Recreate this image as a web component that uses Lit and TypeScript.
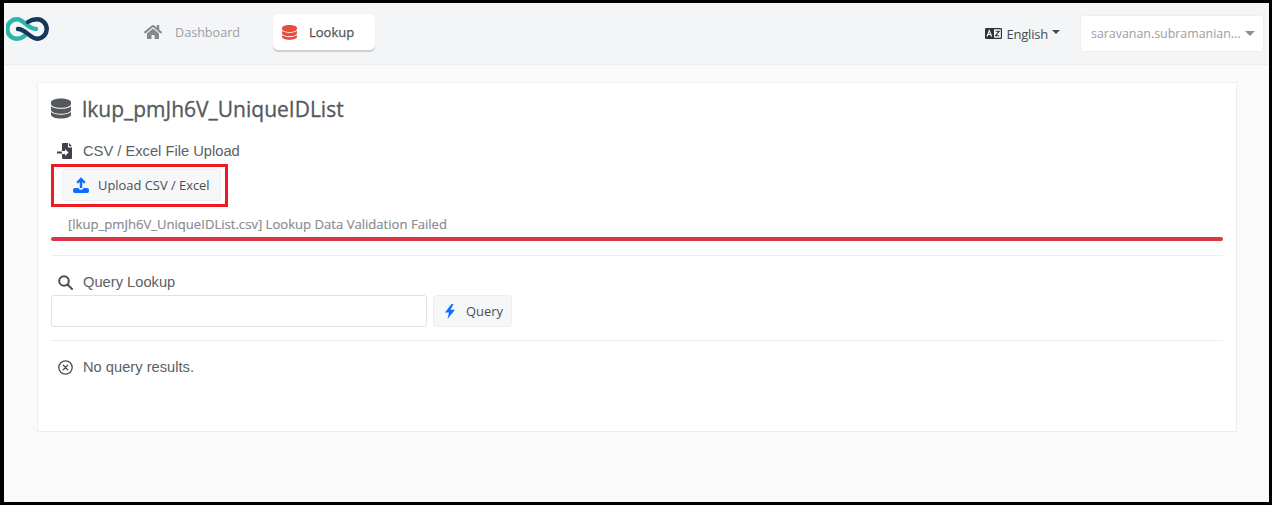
import { LitElement, html, css, svg } from "lit";
import { customElement } from "lit/decorators.js";

const db = svg`<path d="M224 32C100 32 0 70 0 117v38c0 47 100 85 224 85s224-38 224-85v-38C448 70 348 32 224 32zM0 203v84c0 47 100 85 224 85s224-38 224-85v-84c-48 40-136 61-224 61S48 243 0 203zM0 335v60c0 47 100 85 224 85s224-38 224-85v-60c-48 40-136 61-224 61S48 375 0 335z"/>`;

@customElement("app-root")
export class AppRoot extends LitElement {
  static styles = css`
    :host { display: block; width: 1272px; height: 505px; font-family: "Open Sans", sans-serif; }
    .frame { box-sizing: border-box; width: 1272px; height: 505px; border: solid #000; border-width: 3px 3px 3px 4px; background: #fafafa; display: flex; flex-direction: column; overflow: hidden; }
    .nav { height: 62px; flex: none; box-sizing: border-box; background: #f4f5f7; border-bottom: 1px solid #eceef0; display: flex; align-items: flex-start; }
    .logo { width: 44px; height: 28px; margin: 12px 0 0 2px; flex: none; }
    .links { display: flex; margin-left: 86px; margin-top: 11px; gap: 17px; }
    .link { display: flex; align-items: center; height: 36px; box-sizing: border-box; font-size: 12.6px; color: #9a9ea3; }
    .link svg { display: block; }
    .dash { padding: 0 16px 0 7px; gap: 12px; }
    .look { width: 102px; padding-left: 9px; gap: 12px; background: #fff; border-radius: 5px; color: #50545a; font-size: 13px; -webkit-text-stroke: 0.25px #50545a; box-shadow: 0 2px 1px rgba(0,0,0,.16); }
    .right { margin-left: auto; display: flex; align-items: center; margin-top: 12px; margin-right: 5px; }
    .lang { display: flex; align-items: center; font-size: 13px; letter-spacing: -0.2px; color: #454a50; gap: 4px; margin-right: 20px; }
    .caret { width: 0; height: 0; border: 4px solid transparent; border-top-color: currentColor; border-bottom: 0; margin-bottom: 3px; }
    .user { width: 184px; height: 37px; box-sizing: border-box; background: #fff; border: 1px solid #eceef0; border-radius: 4px; display: flex; align-items: center; justify-content: space-between; padding: 0 8px 0 10px; font-size: 12.4px; color: #9a9ea3; }
    .user .caret { border-width: 5px; border-bottom: 0; color: #8b8f94; margin: 0; }
    .main { padding: 17px 32px 0 33px; flex: 1; }
    .card { box-sizing: border-box; height: 350px; background: #fff; border: 1px solid #eeeeee; padding: 13px 13px 0 13px; }
    h1 { margin: 0; display: flex; align-items: center; gap: 11px; font-size: 21px; line-height: 28px; font-weight: 400; -webkit-text-stroke: 0.3px #55595e; color: #55595e; }
    h1 svg { margin-top: -2px; }
    h1 span { margin-top: -1px; }
    .sec { display: flex; align-items: center; font-family: "Liberation Sans", sans-serif; font-size: 14.7px; line-height: 20px; color: #5c6066; }
    .sec .ic { width: 28px; margin-right: 4px; display: flex; justify-content: center; flex: none; }
    .s1 { margin-top: 18px; }
    .red { display: inline-block; vertical-align: top; margin-top: 3px; border: 3px solid #ed1c24; padding: 2px 4px 3px 8px; }
    .btn { display: inline-flex; align-items: center; gap: 10px; height: 32px; box-sizing: border-box; background: #f6f7f9; border: 1px solid #eceef0; border-radius: 3px; font-size: 12.9px; color: #4a4e54; vertical-align: top; }
    .up { padding: 0 10px 0 10px; gap: 9px; }
    .msg { margin: 8px 0 0 17px; font-size: 13.1px; -webkit-text-stroke: 0.2px #8a8d91; line-height: 18px; color: #8a8d91; white-space: nowrap; }
    .bar { height: 4px; border-radius: 2px; background: #dc3545; margin-top: 4px; }
    hr { border: 0; border-top: 1px solid #eeeeee; margin: 0; }
    .h1 { margin-top: 14px; }
    .s2 { margin-top: 16px; }
    .q { display: flex; gap: 6px; margin-top: 3px; }
    .input { width: 376px; height: 32px; box-sizing: border-box; background: #fff; border: 1px solid #e0e2e4; border-radius: 3px; }
    .qb { padding: 0 8px 0 10px; gap: 10px; }
    .h2 { margin-top: 13px; }
    .s3 { margin-top: 16px; }
  `;

  render() {
    return html`<div class="frame">
      <div class="nav">
        <svg class="logo" viewBox="6 15 44 28" fill="none" stroke-width="4.4" stroke-linecap="round">
          <path d="M24.500 36C22 38 19.500 38.700 17 38.700A9.700 9.700 0 0 1 17 19.300C24 19.300 27 28.500 36 29" stroke="#2bb5ad"/>
          <path d="M28 22C31 20 33.500 19.300 37 19.300A9.700 9.700 0 0 1 37 38.700C30 38.700 26 29 18 29" stroke="#14375c"/>
        </svg>
        <div class="links">
          <div class="link dash">
            <svg width="20" height="16" viewBox="0 0 576 512" fill="#85888c"><path d="M280 148 96 300v164a16 16 0 0 0 16 16h112a16 16 0 0 0 16-16v-96a16 16 0 0 1 16-16h64a16 16 0 0 1 16 16v96a16 16 0 0 0 16 16h112a16 16 0 0 0 16-16V300L296 148a12 12 0 0 0-16 0zM572 251l-84-69V44a12 12 0 0 0-12-12h-56a12 12 0 0 0-12 12v72l-89-74a48 48 0 0 0-61 0L4 251a12 12 0 0 0-2 17l26 31a12 12 0 0 0 17 2L280 107a12 12 0 0 1 16 0l235 194a12 12 0 0 0 17-2l26-31a12 12 0 0 0-2-17z"/></svg>
            <span>Dashboard</span>
          </div>
          <div class="link look">
            <svg width="15" height="17" viewBox="0 0 448 512" fill="#e74c3c">${db}</svg>
            <span>Lookup</span>
          </div>
        </div>
        <div class="right">
          <div class="lang">
            <svg width="17" height="11" viewBox="0 0 17 11"><rect width="17" height="11" rx="1.200" fill="#2f3338"/><rect x="9" y="1.300" width="6.800" height="8.400" fill="#fff"/><path d="M2 8.500 4.300 2.500 6.600 8.500M3 6.500H5.600" fill="none" stroke="#fff" stroke-width="1.100"/><path d="M10.500 3.200H14.300L10.500 7.800H14.300" fill="none" stroke="#2f3338" stroke-width="1.100"/></svg>
            <span>English</span><i class="caret"></i>
          </div>
          <div class="user"><span>saravanan.subramanian...</span><i class="caret"></i></div>
        </div>
      </div>
      <div class="main">
        <div class="card">
          <h1><svg width="20" height="23" viewBox="0 0 448 512" fill="#55595e">${db}</svg><span>lkup_pmJh6V_UniqueIDList</span></h1>
          <div class="sec s1"><span class="ic"><svg width="16" height="16" viewBox="0 0 16 16" fill="#3f4349"><path d="M6 0h5v4.500h4V15a1 1 0 0 1-1 1H6a1 1 0 0 1-1-1v-4H8v2l3.500-3.500L8 6v2H5V1a1 1 0 0 1 1-1z"/><path d="M12 0l3 3.300h-3z"/><rect x="0" y="8.500" width="5" height="2"/></svg></span><span>CSV / Excel File Upload</span></div>
          <div class="red">
            <div class="btn up">
              <svg width="16" height="16" viewBox="0 0 16 16"><path d="M8 11V2.500M4.200 5.800 8 2l3.800 3.800" fill="none" stroke="#0d6efd" stroke-width="2.400"/><path d="M0 13a2 2 0 0 1 2-2h3.500c.6 1.300 1.400 1.800 2.500 1.800s1.900-.5 2.500-1.800H14a2 2 0 0 1 2 2v1a2 2 0 0 1-2 2H2a2 2 0 0 1-2-2z" fill="#0d6efd"/></svg>
              <span>Upload CSV / Excel</span>
            </div>
          </div>
          <div class="msg">[lkup_pmJh6V_UniqueIDList.csv] Lookup Data Validation Failed</div>
          <div class="bar"></div>
          <hr class="h1" />
          <div class="sec s2"><span class="ic"><svg width="15" height="15" viewBox="0 0 15 15" fill="none" stroke="#4a4e54" stroke-width="2"><circle cx="6" cy="6" r="4.800"/><path d="M9.500 9.500 14 14" stroke-linecap="round"/></svg></span><span>Query Lookup</span></div>
          <div class="q">
            <div class="input"></div>
            <div class="btn qb">
              <svg width="12" height="15" viewBox="0 0 12 15" fill="#0d6efd"><path d="M7.500 0 1 8.500h4L3.500 15 11 5.800H6.500L9.500 0z"/></svg>
              <span>Query</span>
            </div>
          </div>
          <hr class="h2" />
          <div class="sec s3"><span class="ic"><svg width="15" height="15" viewBox="0 0 15 15" fill="none" stroke="#4a4e54" stroke-width="1.300"><circle cx="7.500" cy="7.500" r="6.700"/><path d="M5.300 5.300 9.700 9.700M9.700 5.300 5.300 9.700" stroke-linecap="round"/></svg></span><span>No query results.</span></div>
        </div>
      </div>
    </div>`;
  }
}
